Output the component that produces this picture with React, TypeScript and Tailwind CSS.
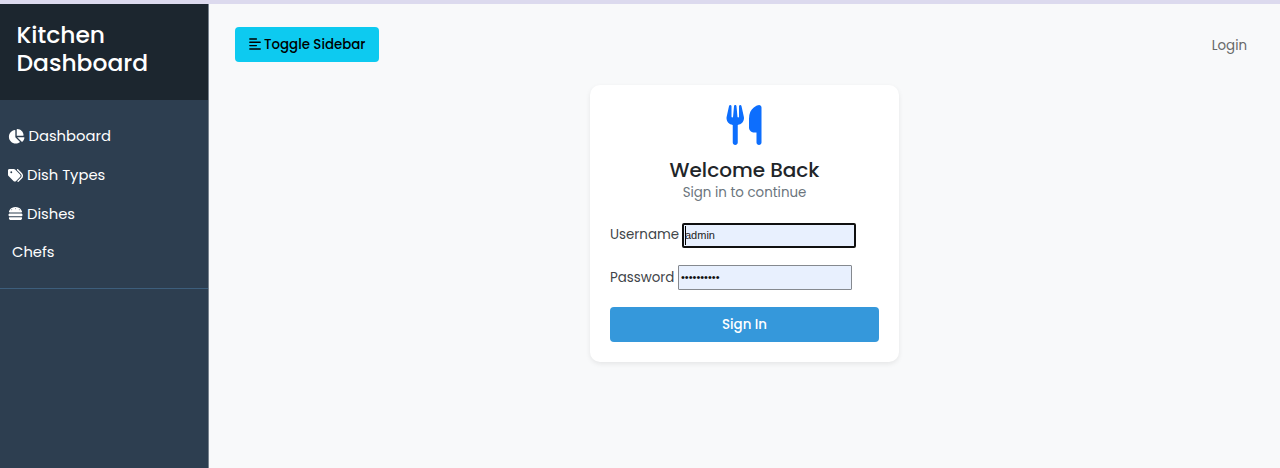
import { FaBurger, FaChartPie, FaTags, FaUtensils } from "react-icons/fa6";

export default function App() {
  return (
    <div className="flex h-[468px] w-[1280px] flex-col overflow-hidden bg-[#f8f9fa] font-['Poppins','Inter',sans-serif]">
      <div className="h-1 shrink-0 bg-[#dcdaee]" />
      <div className="flex min-h-0 flex-1">
        <aside className="w-[209px] shrink-0 border-r border-[#78838f] bg-[#2d3e50] text-white">
          <h2 className="h-24 w-[208px] bg-[#1c262f] pt-[17px] pr-4 pl-[16.5px] text-[23.4px] leading-7 font-medium">
            Kitchen Dashboard
          </h2>
          <nav className="flex h-[189px] flex-col border-b border-[#3d5e7c] pt-[17px] text-[14.75px] leading-[22px]">
            <a className="flex h-[38.7px] items-center pl-2">
              <FaChartPie className="mr-1 size-[16.5px]" />
              Dashboard
            </a>
            <a className="flex h-[38.7px] items-center pl-2">
              <FaTags className="mr-[4px] size-[15px]" />
              Dish Types
            </a>
            <a className="flex h-[38.7px] items-center pl-2">
              <FaBurger className="mr-1 size-[15px]" />
              Dishes
            </a>
            <a className="flex h-[38.7px] items-center pl-3">Chefs</a>
          </nav>
        </aside>
        <div className="flex flex-1 flex-col">
          <header className="flex h-[81px] shrink-0 items-center justify-between pr-[33px] pl-[26px]">
            <button className="flex h-[35px] w-[144px] items-center rounded bg-[#0dcaf0] pl-[14px] text-[13.35px] font-medium text-black">
              <svg className="mr-[3px] mb-px h-[12px] w-[12px] shrink-0" viewBox="0 0 12 12" fill="none" stroke="currentColor" strokeWidth="1.4" strokeLinecap="round">
                <path d="M.8 1h6.6M.8 4.3h10.4M.8 7.6h6.6M.8 11h10.4" />
              </svg>
              <span className="pt-[2px] whitespace-nowrap">Toggle Sidebar</span>
            </button>
            <a className="pt-[3px] text-[13.4px] text-[#676869]">Login</a>
          </header>
          <main className="ml-[381px] flex h-[277px] w-[309px] flex-col rounded-[10px] bg-white px-5 shadow-[0_2px_5px_rgba(0,0,0,0.08)]">
            <FaUtensils className="mt-5 mr-px h-10 w-10 self-center text-[#0d6efd]" />
            <h1 className="mt-[13px] text-center text-[20px] leading-6 font-medium text-[#212529]">Welcome Back</h1>
            <p className="text-center text-[13.4px] leading-[22px] text-[#6c757d]">Sign in to continue</p>
            <div className="mt-[18px] flex h-[26px] items-center">
              <label className="w-[72px] pt-px text-[13.4px] whitespace-nowrap text-[#414549]">Username</label>
              <div className="flex h-[25px] w-[174px] items-center rounded-[2px] border-2 border-[#101010] bg-[#e8f0fe] pl-px font-['Liberation_Sans',sans-serif] text-[11px] text-[#222]">
                <span className="-mr-px h-[19px] w-px bg-black" />
                <span>admin</span>
              </div>
            </div>
            <div className="mt-4 flex h-[26px] items-center">
              <label className="w-[68px] pt-[2px] text-[13.4px] whitespace-nowrap text-[#414549]">Password</label>
              <div className="flex h-[25px] w-[174px] items-center rounded-[1px] border border-[#85898f] bg-[#e8f0fe] pl-[2px] font-['Liberation_Sans',sans-serif] text-[11px] text-[#111]">
                <span className="pt-px">••••••••••</span>
              </div>
            </div>
            <button className="mt-[17px] h-[35px] rounded bg-[#3598db] pt-[2px] text-[13.4px] font-medium text-white">Sign In</button>
          </main>
        </div>
      </div>
    </div>
  );
}
